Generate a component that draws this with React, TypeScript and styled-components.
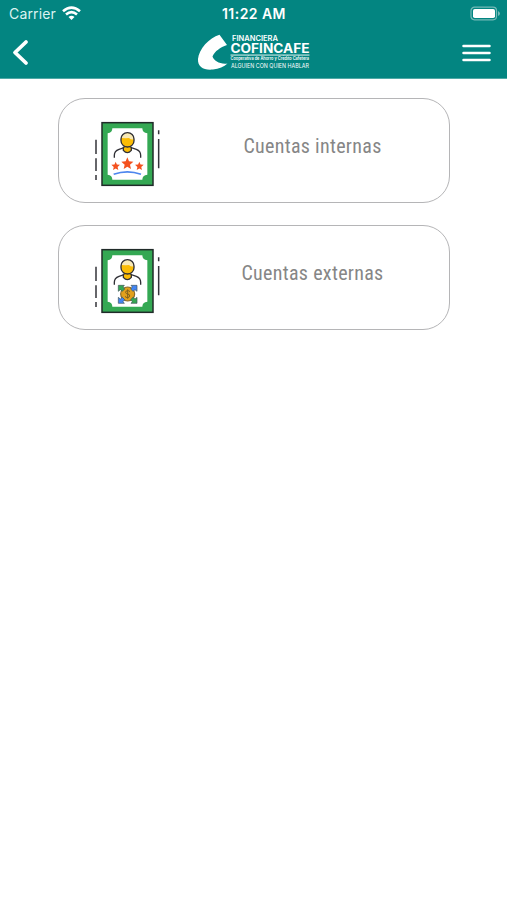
import React from 'react';
import styled, { createGlobalStyle } from 'styled-components';

const Global = createGlobalStyle`
  body { margin: 0; background: #fff; }
  * { box-sizing: border-box; }
`;

const Screen = styled.div`
  width: 100%;
  min-height: 900px;
  background: #fff;
`;

const Header = styled.header`
  height: 79px;
  background: #038581;
  color: #fff;
  border-bottom: 1px solid #4fa9a6;
`;

const StatusBar = styled.div`
  display: grid;
  grid-template-columns: 1fr auto 1fr;
  align-items: center;
  height: 27px;
  padding: 0 6px 0 9px;
  font: 400 14px/27px Inter, sans-serif;
`;

const Carrier = styled.div`
  display: flex;
  align-items: center;
  gap: 6px;
  color: #dcf3f1;
  letter-spacing: 0.15px;
`;

const Clock = styled.time`
  font-weight: 600;
  font-size: 14px;
  letter-spacing: 0.45px;
  margin-right: 2px;
  padding-top: 1px;
  line-height: 26px;
`;

const Battery = styled.svg`
  justify-self: end;
  display: block;
`;

const NavBar = styled.nav`
  display: grid;
  grid-template-columns: 1fr auto 1fr;
  align-items: center;
  height: 51px;
  padding: 0 16px 0 12px;
`;

const IconButton = styled.button<{ $end?: boolean }>`
  display: block;
  padding: 0;
  border: 0;
  background: none;
  color: inherit;
  justify-self: ${(p) => (p.$end ? 'end' : 'start')};
  svg { display: block; }
`;

const LogoArt = styled.svg`
  display: block;
  margin-left: 2px;
  overflow: visible;
  font-family: Inter, sans-serif;
`;

const List = styled.main`
  display: flex;
  flex-direction: column;
  gap: 22px;
  padding: 19px 57px 0 58px;
`;

const Card = styled.button`
  display: grid;
  grid-template-columns: 76px 1fr;
  align-items: start;
  height: 105px;
  padding: 16px 0 0 30.5px;
  border: 1.5px solid #b5b5b7;
  border-radius: 27px;
  background: #fff;
`;

const Label = styled.span`
  justify-self: center;
  margin-top: 16.5px;
  margin-left: 10.5px;
  white-space: nowrap;
  font: 400 20px/28px 'Roboto Condensed', Roboto, sans-serif;
  font-stretch: 75%;
  letter-spacing: 0.3px;
  color: #868686;
`;

const CardArt = styled.svg`
  display: block;
`;

const STAR = 'M0-18 5-6 18-5 8 4 11 17 0 10-11 17-8 4-18-5-5-6Z';

const Stars = () => (
  <g>
    <g fill="#f4511e">
      <path d={STAR} transform="translate(112 145)" />
      <path d={STAR} transform="translate(77 153) scale(.72)" />
      <path d={STAR} transform="translate(148 153) scale(.72)" />
    </g>
    <path d="M71 178Q112 163 153 178" fill="none" stroke="#4d86ee" strokeWidth="5" />
  </g>
);

const ARROW = 'M0 0H18L14 5 19 11 12 18 6 13 0 18Z';

const CoinNetwork = () => (
  <g>
    <circle cx="113" cy="156" r="21" fill="#e2a01c" stroke="#8a6a2a" strokeWidth="3.5" />
    <g stroke="#3f5358" strokeWidth="2">
      <path d={ARROW} transform="translate(85 130)" fill="#34a853" />
      <path d={ARROW} transform="translate(141 130) scale(-1 1)" fill="#4285f4" />
      <path d={ARROW} transform="translate(85 184) scale(1 -1)" fill="#4285f4" />
      <path d={ARROW} transform="translate(141 184) scale(-1 -1)" fill="#34a853" />
    </g>
    <path d="M120 149q-4-4-8-3-6 1-5 6 1 3 6 4 7 1 6 6-1 5-7 5-4 0-7-4M113 142v28" fill="none" stroke="#80601c" strokeWidth="3" />
  </g>
);

const AccountArt = ({ external }: { external?: boolean }) => (
  <CardArt width="76" height="76" viewBox="0 0 228 228" aria-hidden="true">
    <rect x="36" y="23" width="153" height="188" fill="#34a853" stroke="#202b29" strokeWidth="4.5" />
    <path d="M67 40H157Q157 53 172 55V179Q157 181 157 194H67Q67 181 53 179V55Q67 53 67 40Z" fill="#fff" />
    <path d="M18 74v43M18 130v38M18 180v15M206 46v12M206 72v88" stroke="#34343a" strokeWidth="4.5" />
    <path d="M73 128v-7q0-13 14-18l15-5 10 4 12-4 15 5q13 5 13 18v7" fill="none" stroke="#303036" strokeWidth="4" />
    <path d="M100 97q12-7 24 0v9q-12 14-24 0Z" fill="#fbbc05" stroke="#303036" strokeWidth="4" />
    <rect x="93" y="53" width="39" height="43" rx="19" fill="#fbbc05" />
    <path d="M94 69q0-15 18.500-15T131 73q-8 2-14-4-8 1-23 0Z" fill="#f8e9b5" />
    <rect x="93" y="53" width="39" height="43" rx="19" fill="none" stroke="#303036" strokeWidth="4" />
    {external ? <CoinNetwork /> : <Stars />}
  </CardArt>
);

const Logo = () => (
  <LogoArt width="114" height="38" viewBox="196 34 114 38" fill="#fff" aria-label="Financiera Cofincafe">
    <path d="M219.500 34.800C209 38 199 49 198 59C197.500 67 204 70.500 213 69.500C219 68.500 224 67 227.500 63.500C220 64.500 214 61 212.500 56.500C215 51 220 47.500 227 45Z" />
    <text x="232" y="41.400" fontSize="7" fontWeight="600" textLength="46" lengthAdjust="spacingAndGlyphs">FINANCIERA</text>
    <text x="230.500" y="52.800" fontSize="12.800" fontWeight="700" textLength="79" lengthAdjust="spacingAndGlyphs">COFINCAFE</text>
    <rect x="230.500" y="54.600" width="79" height=".9" />
    <text x="230.500" y="60.200" fontSize="4.800" fontWeight="600" textLength="78.500" lengthAdjust="spacingAndGlyphs">Cooperativa de Ahorro y Crédito Cafetera</text>
    <text x="231" y="67.500" fontSize="6.200" textLength="78" lengthAdjust="spacingAndGlyphs">ALGUIEN CON QUIEN HABLAR</text>
  </LogoArt>
);

const accounts = [
  { name: 'Cuentas internas', external: false },
  { name: 'Cuentas externas', external: true },
];

export default function App() {
  return (
    <Screen>
      <Global />
      <Header>
        <StatusBar>
          <Carrier>
            Carrier
            <svg width="19" height="15" viewBox="0 0 19 15" fill="none" stroke="#fff" strokeWidth="2.600">
              <path d="M1 5.300Q9.500-2 18 5.300M4 8.500Q9.500 3.700 15 8.500" />
              <path d="M6.500 11Q9.500 8.400 12.500 11L9.500 14Z" fill="#fff" stroke="none" />
            </svg>
          </Carrier>
          <Clock>11:22 AM</Clock>
          <Battery width="31" height="15" viewBox="0 0 31 15">
            <rect x="1" y="1.200" width="25.500" height="12.600" rx="3.500" fill="none" stroke="#75bab7" strokeWidth="1.200" />
            <rect x="3" y="3" width="22" height="9" rx="1.800" fill="#fff" />
            <path d="M28 5q2 1 2 2.500T28 10Z" fill="#75bab7" />
          </Battery>
        </StatusBar>
        <NavBar>
          <IconButton aria-label="Volver">
            <svg width="18" height="28" viewBox="0 0 18 28" fill="none" stroke="#fff" strokeWidth="3.800" strokeLinecap="round" strokeLinejoin="round">
              <path d="M14 3 3 13.500 14 24" />
            </svg>
          </IconButton>
          <Logo />
          <IconButton $end aria-label="Menú">
            <svg width="29" height="20" viewBox="0 0 29 20" stroke="#fff" strokeWidth="2.500" strokeLinecap="round">
              <path d="M1.500 3h26M1.500 10h26M1.500 17h26" />
            </svg>
          </IconButton>
        </NavBar>
      </Header>
      <List>
        {accounts.map((account) => (
          <Card key={account.name}>
            <AccountArt external={account.external} />
            <Label>{account.name}</Label>
          </Card>
        ))}
      </List>
    </Screen>
  );
}
